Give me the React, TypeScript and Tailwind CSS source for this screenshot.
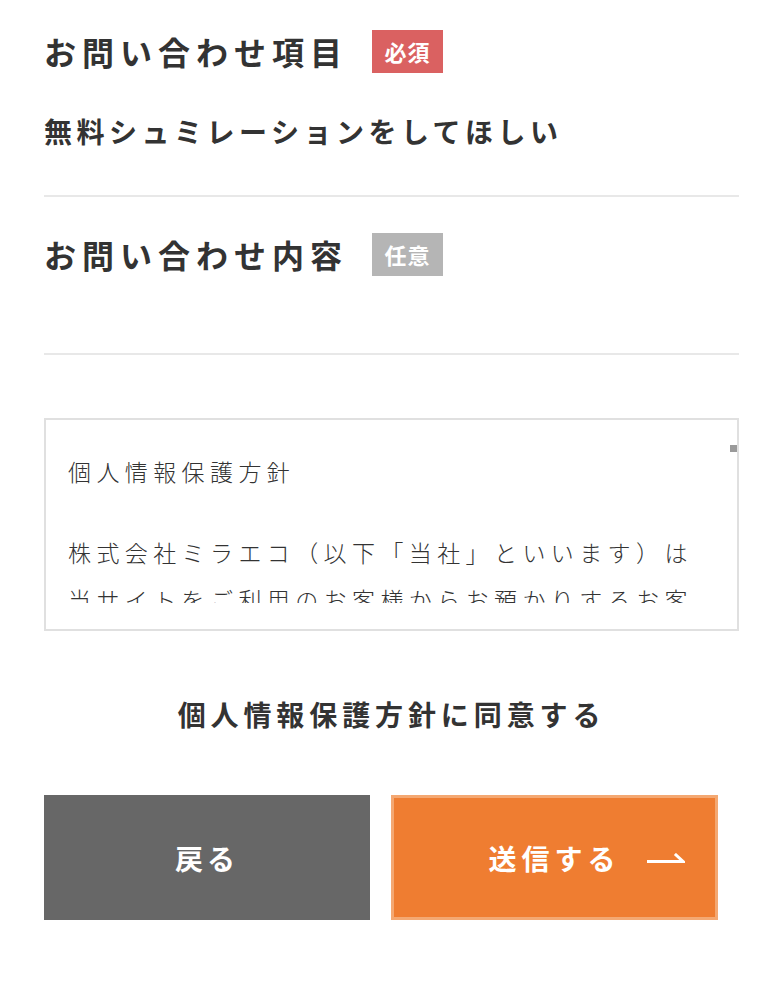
const FONT = "font-['Noto_Sans_CJK_JP','Noto_Sans',sans-serif]";

function Heading({ label, badge, required }: { label: string; badge: string; required: boolean }) {
  return (
    <div className="flex items-center h-[43px]">
      <h2 className="text-[32px] font-bold tracking-[6px] leading-[43px] text-[#333]">{label}</h2>
      <span
        className={`ml-[24px] w-[71px] h-[43px] flex items-center justify-center text-white text-[22px] font-bold tracking-[1px] ${
          required ? "bg-[#da6161]" : "bg-[#b5b5b5]"
        }`}
      >
        {badge}
      </span>
    </div>
  );
}

function ArrowRight() {
  return (
    <svg width="38" height="10" viewBox="0 0 38 10" fill="none" stroke="white" strokeWidth="3" strokeLinecap="square">
      <path d="M1 8.5 H36 L29 2" />
    </svg>
  );
}

export default function App() {
  return (
    <div className={`${FONT} bg-white min-h-[1000px] pl-[44px] pr-[45px] pt-[30px] text-[#333]`}>
      {/* お問い合わせ項目 */}
      <section className="border-b-2 border-[#e8e8e8] pb-[46px]">
        <Heading label="お問い合わせ項目" badge="必須" required />
        <p className="mt-[40px] text-[28px] font-bold tracking-[4.5px] leading-[36px]">
          無料シュミレーションをしてほしい
        </p>
      </section>

      {/* お問い合わせ内容 */}
      <section className="border-b-2 border-[#e8e8e8] pt-[36px] pb-[77px]">
        <Heading label="お問い合わせ内容" badge="任意" required={false} />
      </section>

      {/* 個人情報保護方針（スクロール枠） */}
      <div className="relative mt-[63px] border-2 border-[#e0e0e0] pl-[22px] pr-[36px] pt-[28px] pb-[26px]">
        <div className="h-[155px] overflow-hidden text-[23px] font-light tracking-[5.4px] leading-[47px]">
          <p className="mb-[34px]">個人情報保護方針</p>
          <p>株式会社ミラエコ（以下「当社」といいます）は当サイトをご利用のお客様からお預かりするお客</p>
        </div>
        <span className="absolute right-0 top-[25px] w-[7px] h-[7px] bg-[#9a9a9a]" />
      </div>

      <p className="mt-[63px] text-center text-[28px] font-bold tracking-[4.9px] leading-[40px]">
        個人情報保護方針に同意する
      </p>

      {/* ボタン */}
      <div className="mt-[61px] flex gap-[21px]">
        <button className="w-[326px] h-[125px] bg-[#676767] text-white text-[28px] font-bold tracking-[4px] flex items-center justify-center">
          戻る
        </button>
        <button className="relative w-[327px] h-[125px] bg-[#ef7d31] border-[3px] border-[#f4a872] text-white text-[28px] font-bold tracking-[5px] flex items-center justify-center">
          送信する
          <span className="absolute right-[30px] top-1/2 -translate-y-1/2 flex">
            <ArrowRight />
          </span>
        </button>
      </div>
    </div>
  );
}
